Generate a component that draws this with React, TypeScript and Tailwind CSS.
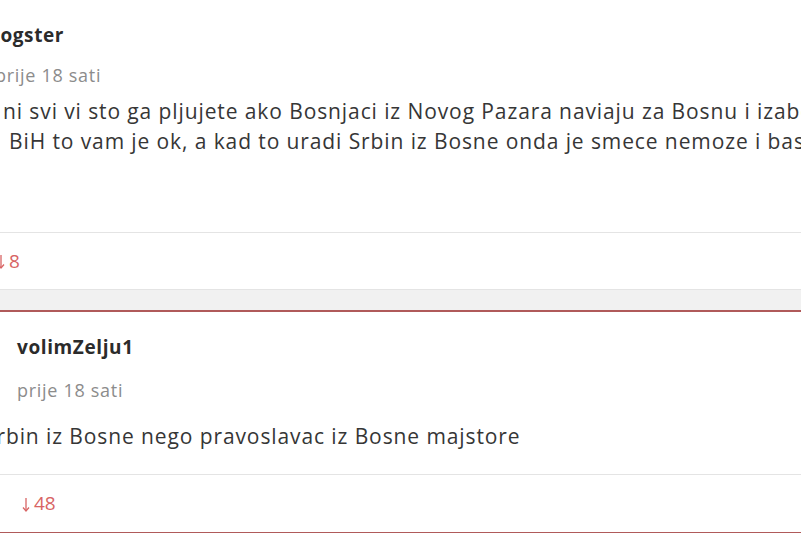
function DownArrow() {
  return (
    <svg width="8" height="15" viewBox="0 0 8 15" fill="none" stroke="currentColor" strokeWidth="1.3" className="mt-[1px]">
      <path d="M4 1v12.5" />
      <path d="M1 10.5l3 3.5 3-3.5" />
    </svg>
  )
}

export default function App() {
  return (
    <div className="w-[801px] h-[534px] overflow-hidden bg-white font-['Open_Sans',sans-serif] text-[#363636]">
      {/* first comment, cut on the left and top */}
      <div className="pt-[23px]">
        <div className="h-6 leading-6 text-[19px] font-bold tracking-[0.6px] text-[#2b2b2b] whitespace-nowrap ml-[-6px]">jogster</div>
        <div className="mt-4 h-6 leading-6 text-[18px] tracking-[0.7px] text-[#8c8c8c] whitespace-nowrap ml-[-5px]">prije 18 sati</div>
        <div className="mt-[9px] text-[21px] leading-[30px] tracking-[0.9px] whitespace-nowrap">
          <p className="ml-[3px]">ni svi vi sto ga pljujete ako Bosnjaci iz Novog Pazara naviaju za Bosnu i izaberu da igraju za</p>
          <p className="ml-[9px]">BiH to vam je ok, a kad to uradi Srbin iz Bosne onda je smece nemoze i bas</p>
        </div>
        <div className="mt-[76px] h-[58px] border-y border-[#e4e4e4] flex items-center text-[19px] text-[#d86464] whitespace-nowrap">
          <span className="ml-[-3px] flex"><DownArrow /></span>
          <span className="ml-[4px]">8</span>
        </div>
      </div>

      <div className="h-[20px] bg-[#f1f1f1]" />

      {/* second comment */}
      <div className="border-t-2 border-b border-[#b05a5a]">
        <div className="pt-[23px] pl-[17px]">
          <div className="h-6 leading-6 text-[19px] font-bold tracking-[0.6px] text-[#2b2b2b]">volimZelju1</div>
          <div className="mt-[19px] h-6 leading-6 text-[18px] tracking-[0.7px] text-[#8c8c8c]">prije 18 sati</div>
        </div>
        <p className="mt-[19px] text-[21px] leading-[30px] tracking-[0.9px] whitespace-nowrap ml-[-16px]">Srbin iz Bosne nego pravoslavac iz Bosne majstore</p>
        <div className="mt-[23px] h-[58px] border-t border-[#e4e4e4] flex items-center pl-[22px] text-[19px] text-[#d86464]">
          <span className="flex"><DownArrow /></span>
          <span className="ml-[4px]">48</span>
        </div>
      </div>
    </div>
  )
}
